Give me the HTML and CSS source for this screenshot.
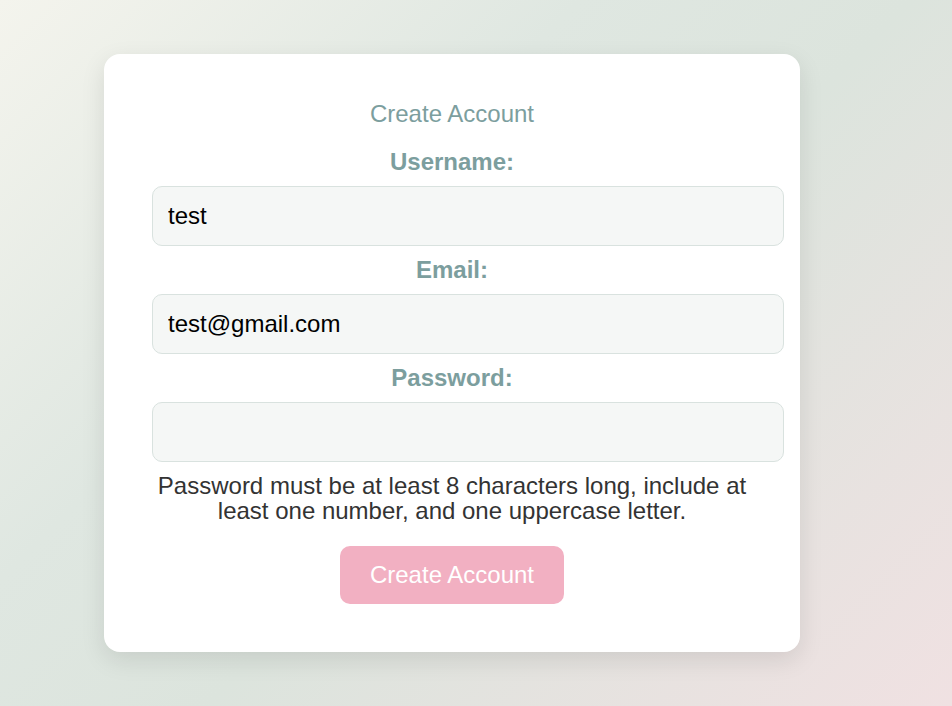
FILE: index.html
```html
<!DOCTYPE html>
<html lang="en">
<head>
<meta charset="utf-8">
<title>Create Account</title>
<link rel="stylesheet" href="styles.css">
</head>
<body>
  <div class="page">
    <form class="card">
      <h2 class="title">Create Account</h2>
      <label class="label" for="username">Username:</label>
      <input class="field" id="username" type="text" value="test">
      <label class="label" for="email">Email:</label>
      <input class="field" id="email" type="email" value="test@gmail.com">
      <label class="label" for="password">Password:</label>
      <input class="field" id="password" type="password" value="">
      <p class="hint">Password must be at least 8 characters long, include at least one number, and one uppercase letter.</p>
      <div class="actions">
        <button class="submit" type="button">Create Account</button>
      </div>
    </form>
  </div>
</body>
</html>
```
FILE: styles.css
```css
html, body {
  margin: 0;
  padding: 0;
  height: 100%;
}
body {
  font-family: "Liberation Sans", Arial, sans-serif;
  background: linear-gradient(135deg, #f4f4ed 0%, #dfe7e1 35%, #dce4dd 55%, #f0e1e2 100%);
  overflow: hidden;
}
.page {
  padding-top: 54px;
  padding-left: 104px;
}
.card {
  box-sizing: border-box;
  width: 696px;
  height: 598px;
  background: #ffffff;
  border-radius: 16px;
  padding: 47px 48px 48px 48px;
  box-shadow: 0 8px 24px rgba(0, 0, 0, 0.10);
  text-align: center;
}
.title {
  margin: 0 0 22px 0;
  font-size: 24px;
  line-height: 26px;
  font-weight: normal;
  color: #7c9e9e;
}
.label {
  display: block;
  margin: 11px 0 11px 0;
  font-size: 24px;
  line-height: 26px;
  font-weight: bold;
  color: #7c9e9e;
}
.title + .label {
  margin-top: 0;
}
.field {
  display: block;
  box-sizing: content-box;
  width: 100%;
  height: 28px;
  margin: 0;
  padding: 15px;
  border: 1px solid #d9e2df;
  border-radius: 10px;
  background: #f5f7f6;
  font-family: "Liberation Sans", Arial, sans-serif;
  font-size: 24px;
  color: #000000;
  text-align: left;
  outline: none;
}
.hint {
  margin: 11px 0 23px 0;
  font-size: 24px;
  line-height: 25px;
  color: #333333;
}
.actions {
  display: flex;
  justify-content: center;
}
.submit {
  width: 224px;
  height: 58px;
  border: none;
  border-radius: 10px;
  background: #f2b0c2;
  color: #ffffff;
  font-family: "Liberation Sans", Arial, sans-serif;
  font-size: 24px;
  cursor: pointer;
}
```
